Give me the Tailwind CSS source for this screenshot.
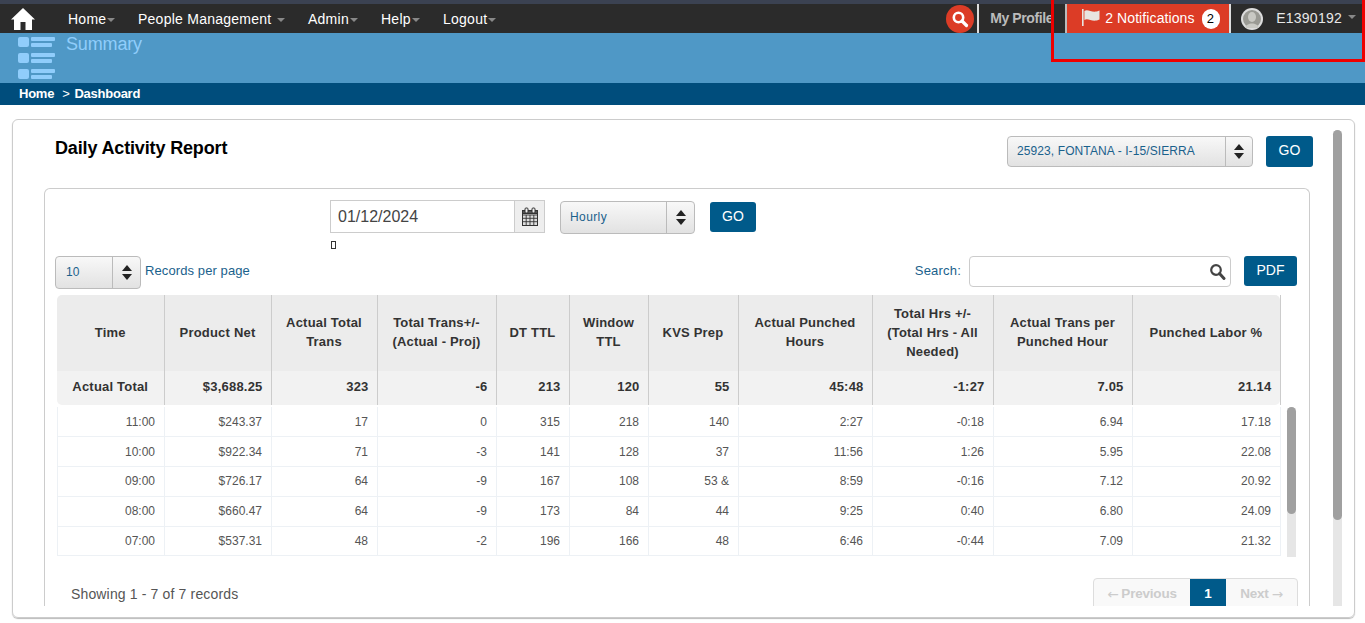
<!DOCTYPE html>
<html lang="en">
<head>
  <meta charset="UTF-8">
  <title>Daily Activity Report</title>
  <script src="https://cdn.jsdelivr.net/npm/@tailwindcss/browser@4"></script>
</head>
<body class="bg-white font-['Liberation_Sans',Arial,sans-serif] text-[#333] h-[623px] overflow-hidden relative">

  <!-- top nav -->
  <div class="h-[4px] bg-[#3b4252]"></div>
  <nav class="h-[29px] bg-[#2b2b2b] flex items-center text-white text-[14px] tracking-[0.25px] pl-[11px]">
    <svg class="w-[24px] h-[24px] mr-[33px]" viewBox="0 0 24 24" fill="#fff"><path d="M12 1 L24 12.5 L21 12.5 L21 23 L14.5 23 L14.5 15 L9.5 15 L9.5 23 L3 23 L3 12.5 L0 12.5 Z"/></svg>
    <a class="flex items-center w-[70px] pt-[2px]">Home<span class="ml-[1px] border-x-[4px] border-x-transparent border-t-[4px] border-t-[#888]"></span></a>
    <a class="flex items-center w-[170px] pt-[2px]">People Management<span class="ml-[6px] border-x-[4px] border-x-transparent border-t-[4px] border-t-[#888]"></span></a>
    <a class="flex items-center w-[73px] pt-[2px]">Admin<span class="ml-[1px] border-x-[4px] border-x-transparent border-t-[4px] border-t-[#888]"></span></a>
    <a class="flex items-center w-[62px] pt-[2px]">Help<span class="ml-[1px] border-x-[4px] border-x-transparent border-t-[4px] border-t-[#888]"></span></a>
    <a class="flex items-center pt-[2px]">Logout<span class="ml-[1px] border-x-[4px] border-x-transparent border-t-[4px] border-t-[#888]"></span></a>

    <div class="ml-auto flex items-center h-full">
      <span class="w-[28px] h-[28px] rounded-full bg-[#dc3c26] flex items-center justify-center mr-[3px]">
        <svg class="w-[18px] h-[18px]" viewBox="0 0 18 18" fill="none" stroke="#fff"><circle cx="7.5" cy="7.5" r="4.7" stroke-width="2.6"/><path d="M11 11 L15.5 15.5" stroke-width="3.2" stroke-linecap="round"/></svg>
      </span>
      <span class="w-[2px] h-full bg-[#ddd]"></span>
      <span class="w-[86px] pl-[11px] font-bold text-[#bbb] text-[14px] tracking-[-0.4px]">My Profile</span>
      <span class="w-[2px] h-full bg-[#bbb]"></span>
      <div class="w-[162px] h-full bg-[#dc3c26] flex items-center pl-[14px]">
        <svg class="w-[19px] h-[17px] mr-[5px] -mt-[3px]" viewBox="0 0 19 17" fill="#e8e4e0"><path d="M1 0 H2.6 V17 H1 Z M3.4 2 C7 -1 11 5 18.5 1.5 V10.5 C11 14 7 8 3.4 11 Z"/></svg>
        <span class="whitespace-nowrap tracking-[0.1px]">2 Notifications</span>
        <span class="ml-[7px] w-[18px] h-[20px] rounded-full bg-white text-black text-[13px] flex items-center justify-center">2</span>
      </div>
      <span class="w-[2px] h-full bg-[#ddd]"></span>
      <span class="ml-[10px] w-[22px] h-[22px] rounded-full bg-[#ddd] overflow-hidden flex justify-center">
        <svg class="w-[22px] h-[22px]" viewBox="0 0 22 22"><circle cx="11" cy="11" r="9" fill="#9a9a94"/><ellipse cx="11" cy="9" rx="4" ry="5" fill="#c9c9c4"/><path d="M4 20 C5 14 17 14 18 20 Z" fill="#c9c9c4"/></svg>
      </span>
      <span class="ml-[13px] text-[#e8e8e8]">E1390192</span>
      <span class="ml-[6px] mr-[9px] -mt-[4px] border-x-[4px] border-x-transparent border-t-[4px] border-t-[#888]"></span>
    </div>
  </nav>

  <!-- page title -->
  <div class="h-[50px] bg-[#4f98c6] flex pl-[18px]">
    <svg class="w-[38px] h-[44px] mt-[4px]" viewBox="0 0 38 44" fill="#90cdfb">
      <rect x="0" y="0" width="11" height="10" rx="2"/><rect x="13" y="0" width="24" height="4" rx="1"/><rect x="13" y="6" width="21" height="4" rx="1"/>
      <rect x="0" y="16" width="11" height="10" rx="2"/><rect x="13" y="16" width="24" height="4" rx="1"/><rect x="13" y="22" width="21" height="4" rx="1"/>
      <rect x="0" y="32" width="11" height="10" rx="2"/><rect x="13" y="32" width="24" height="4" rx="1"/><rect x="13" y="38" width="21" height="4" rx="1"/>
    </svg>
    <h1 class="ml-[10px] text-[18px] leading-[22px] tracking-[-0.15px] text-[#90cdfb]">Summary</h1>
  </div>

  <!-- breadcrumb -->
  <div class="h-[22px] bg-[#004d7c] flex items-center pl-[19px] text-white text-[13px] font-bold tracking-[-0.25px]">
    <span>Home</span><span class="ml-[8px] font-normal">&gt;</span><span class="ml-[5px]">Dashboard</span>
  </div>

  <!-- main card -->
  <main class="relative mt-[14px] ml-[12px] w-[1343px] h-[499px] border border-[#ccc] rounded-[6px] shadow-[0_1px_1px_#bbb] pt-[10px]">
    <!-- page scrollbar -->
    <div class="absolute left-[1320px] top-[10px] w-[9px] h-[476px] bg-[#e6e6e6] rounded-t-[5px]">
      <div class="w-[9px] h-[390px] bg-[#a0a0a0] rounded-[5px]"></div>
    </div>

    <div class="h-[476px] overflow-hidden pl-[31px] pr-[44px]">
      <div class="flex justify-between items-start h-[58px]">
        <h2 class="ml-[11px] mt-[6px] text-[18px] leading-[24px] tracking-[-0.15px] font-bold text-black">Daily Activity Report</h2>
        <div class="flex mt-[6px] mr-[-3px]">
          <div class="w-[246px] h-[31px] border border-[#bbb] rounded-[4px] bg-gradient-to-b from-[#f8f8f8] to-[#e2e2e2] flex items-center text-[12px] tracking-[0.1px] text-[#1a618c]">
            <span class="flex-1 pl-[9px] pb-[2px]">25923, FONTANA - I-15/SIERRA</span>
            <span class="w-[27px] h-full border-l border-[#bbb] flex flex-col items-center justify-center gap-[3px]">
              <span class="border-x-[5px] border-x-transparent border-b-[6px] border-b-[#222]"></span>
              <span class="border-x-[5px] border-x-transparent border-t-[6px] border-t-[#222]"></span>
            </span>
          </div>
          <button class="ml-[13px] w-[47px] h-[31px] pb-[2px] bg-[#005a8a] rounded-[3px] text-white text-[14px]">GO</button>
        </div>
      </div>

      <!-- inner card -->
      <section class="w-[1266px] h-[420px] border-x border-t border-[#ccc] rounded-t-[6px] pl-[10px] pr-[12px]">
        <div class="flex pt-[11px] pl-[275px] h-[67px]">
          <div class="relative flex w-[215px] h-[33px] border border-[#ccc]">
            <span class="flex-1 pl-[7px] leading-[31px] text-[16px] text-[#444]">01/12/2024</span>
            <span class="w-[30px] bg-[#eee] border-l border-[#ccc] flex items-center justify-center">
              <svg class="w-[20px] h-[20px]" viewBox="0 0 20 20" fill="none" stroke="#333"><rect x="2.5" y="3.5" width="15" height="15" fill="#ddd"/><path d="M2.5 8 H17.5 M2.5 11.3 H17.5 M2.5 14.7 H17.5 M6.2 8 V18.5 M10 8 V18.5 M13.8 8 V18.5" stroke-width="0.9"/><rect x="2.5" y="3.5" width="15" height="3" fill="#555"/><rect x="5" y="1" width="3" height="5" rx="1" fill="#eee" stroke-width="1"/><rect x="12" y="1" width="3" height="5" rx="1" fill="#eee" stroke-width="1"/></svg>
            </span>
            <!-- missing glyph under the date -->
            <span class="absolute left-0 top-[40px] w-[5px] h-[8px] border border-[#333]"></span>
          </div>
          <div class="ml-[15px] mt-[1px] w-[135px] h-[33px] border border-[#bbb] rounded-[4px] bg-gradient-to-b from-[#f8f8f8] to-[#e2e2e2] flex items-center text-[12px] tracking-[0.4px] text-[#1a618c]">
            <span class="flex-1 pl-[9px] pb-[2px]">Hourly</span>
            <span class="w-[28px] h-full border-l border-[#bbb] flex flex-col items-center justify-center gap-[3px]">
              <span class="border-x-[5px] border-x-transparent border-b-[6px] border-b-[#222]"></span>
              <span class="border-x-[5px] border-x-transparent border-t-[6px] border-t-[#222]"></span>
            </span>
          </div>
          <button class="ml-[15px] mt-[2px] w-[46px] h-[30px] pb-[2px] bg-[#005a8a] rounded-[3px] text-white text-[14px]">GO</button>
        </div>

        <div class="flex items-start h-[39px]">
          <div class="w-[86px] h-[33px] border border-[#bbb] rounded-[4px] bg-gradient-to-b from-[#f8f8f8] to-[#e2e2e2] flex items-center text-[12px] text-[#1a618c]">
            <span class="flex-1 pl-[10px] pb-[2px]">10</span>
            <span class="w-[28px] h-full border-l border-[#bbb] flex flex-col items-center justify-center gap-[3px]">
              <span class="border-x-[5px] border-x-transparent border-b-[6px] border-b-[#222]"></span>
              <span class="border-x-[5px] border-x-transparent border-t-[6px] border-t-[#222]"></span>
            </span>
          </div>
          <span class="ml-[4px] mt-[7px] text-[13px] leading-[16px] tracking-[0.1px] text-[#1a618c]">Records per page</span>
          <span class="ml-auto mt-[7px] text-[13px] leading-[16px] tracking-[0.2px] text-[#1a618c]">Search:</span>
          <div class="ml-[8px] w-[262px] h-[31px] border border-[#ccc] rounded-[4px] flex items-center justify-end pr-[4px]">
            <svg class="w-[17px] h-[17px]" viewBox="0 0 17 17" fill="none" stroke="#444"><circle cx="7" cy="7" r="4.8" stroke-width="2.2"/><path d="M10.5 10.5 L15 15.5" stroke-width="3" stroke-linecap="round"/></svg>
          </div>
          <button class="ml-[13px] w-[53px] h-[30px] pb-[1px] bg-[#005a8a] rounded-[3px] text-white text-[14px]">PDF</button>
        </div>

        <!-- table head -->
        <table class="ml-[2px] w-[1223px] table-fixed border-collapse text-[13px] tracking-[0.2px] text-[#333]">
          <colgroup>
            <col class="w-[107px]"><col class="w-[107px]"><col class="w-[106px]"><col class="w-[119px]"><col class="w-[73px]"><col class="w-[79px]"><col class="w-[90px]"><col class="w-[134px]"><col class="w-[121px]"><col class="w-[139px]"><col class="w-[148px]">
          </colgroup>
          <thead>
            <tr class="h-[76px] bg-[#ececec] font-bold text-center leading-[19px] [&>th]:border-r [&>th]:border-[#ccc] [&>th]:px-[6px] [&>th]:pb-[2px]">
              <th class="rounded-tl-[5px]">Time</th>
              <th>Product Net</th>
              <th>Actual Total Trans</th>
              <th>Total Trans+/- (Actual - Proj)</th>
              <th>DT TTL</th>
              <th>Window TTL</th>
              <th>KVS Prep</th>
              <th>Actual Punched Hours</th>
              <th>Total Hrs +/- (Total Hrs - All Needed)</th>
              <th>Actual Trans per Punched Hour</th>
              <th class="border-r-0 rounded-tr-[5px]">Punched Labor %</th>
            </tr>
            <tr class="h-[34px] bg-[#f2f2f2] font-bold text-right [&>th]:border-r [&>th]:border-[#ccc] [&>th]:pr-[8px] [&>th]:pb-[2px]">
              <th class="text-center rounded-bl-[5px] !pr-0">Actual Total</th>
              <th>$3,688.25</th><th>323</th><th>-6</th><th>213</th><th>120</th><th>55</th><th>45:48</th><th>-1:27</th><th>7.05</th>
              <th class="border-r-0 rounded-br-[5px]">21.14</th>
            </tr>
          </thead>
        </table>

        <div class="relative ml-[2px] mt-[2px] h-[150px] w-[1240px] overflow-hidden">
          <table class="w-[1223px] table-fixed border-collapse text-[12px] text-[#555] text-right">
            <colgroup>
              <col class="w-[107px]"><col class="w-[107px]"><col class="w-[106px]"><col class="w-[119px]"><col class="w-[73px]"><col class="w-[79px]"><col class="w-[90px]"><col class="w-[134px]"><col class="w-[121px]"><col class="w-[139px]"><col class="w-[148px]">
            </colgroup>
            <tbody class="[&>tr]:h-[29.75px] [&>tr]:border-b [&>tr]:border-[#edf1f5] [&_td]:border-r [&_td]:border-[#edf1f5] [&_td]:pr-[9px] [&_td:first-child]:border-l">
              <tr><td>11:00</td><td>$243.37</td><td>17</td><td>0</td><td>315</td><td>218</td><td>140</td><td>2:27</td><td>-0:18</td><td>6.94</td><td>17.18</td></tr>
              <tr><td>10:00</td><td>$922.34</td><td>71</td><td>-3</td><td>141</td><td>128</td><td>37</td><td>11:56</td><td>1:26</td><td>5.95</td><td>22.08</td></tr>
              <tr><td>09:00</td><td>$726.17</td><td>64</td><td>-9</td><td>167</td><td>108</td><td>53 &amp;</td><td>8:59</td><td>-0:16</td><td>7.12</td><td>20.92</td></tr>
              <tr><td>08:00</td><td>$660.47</td><td>64</td><td>-9</td><td>173</td><td>84</td><td>44</td><td>9:25</td><td>0:40</td><td>6.80</td><td>24.09</td></tr>
              <tr><td>07:00</td><td>$537.31</td><td>48</td><td>-2</td><td>196</td><td>166</td><td>48</td><td>6:46</td><td>-0:44</td><td>7.09</td><td>21.32</td></tr>
            </tbody>
          </table>
          <div class="absolute left-[1230px] top-0 w-[9px] h-[150px] bg-[#e6e6e6] rounded-t-[5px]">
            <div class="w-[9px] h-[107px] bg-[#a0a0a0] rounded-[5px]"></div>
          </div>
        </div>

        <!-- footer -->
        <div class="flex justify-between mt-[21px]">
          <span class="ml-[16px] mt-[7px] text-[14px] leading-[18px] tracking-[0.15px] text-[#555]">Showing 1 - 7 of 7 records</span>
          <div class="flex h-[32px] mr-[-1px] border border-[#ddd] rounded-[4px] bg-[#f9f9f9] text-[13.5px] font-bold tracking-[-0.2px] text-[#ccc] overflow-hidden">
            <span class="w-[96px] flex items-center justify-center"><span class="font-['DejaVu_Sans'] font-normal mr-[3px]">←</span>Previous</span>
            <span class="w-[36px] bg-[#005a8a] text-white flex items-center justify-center">1</span>
            <span class="w-[71px] flex items-center justify-center">Next<span class="font-['DejaVu_Sans'] font-normal ml-[3px]">→</span></span>
          </div>
        </div>
      </section>
    </div>
  </main>

  <!-- red annotation box from the reference -->
  <div class="absolute left-[1051px] top-0 w-[314px] h-[62px] border-[3px] border-t-0 border-[#ee0000]"></div>
</body>
</html>
